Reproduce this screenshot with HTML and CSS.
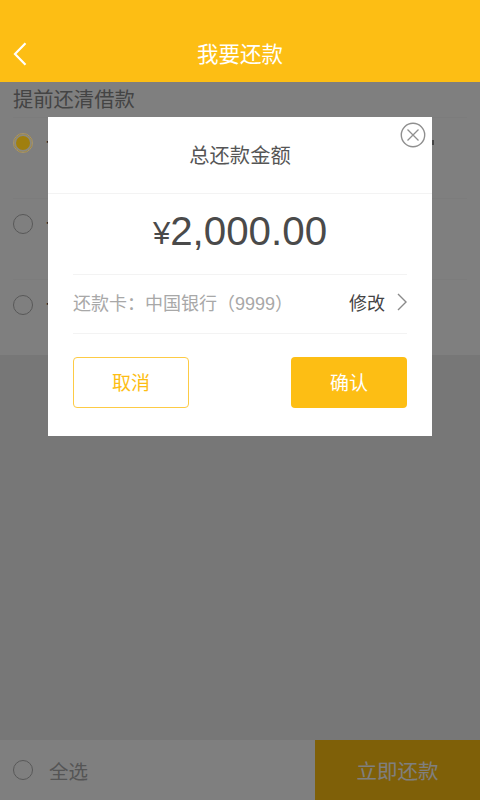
FILE: index.html
```html
<!DOCTYPE html>
<html lang="zh">
<head>
<meta charset="utf-8">
<title>我要还款</title>
<link rel="stylesheet" href="styles.css">
</head>
<body>
<div class="app">
  <main class="page">
    <div class="section-title">提前还清借款</div>
    <div class="row"><span class="radio radio-on"></span><span class="row-text">一</span><span class="row-mark"></span></div>
    <div class="row"><span class="radio"></span><span class="row-text">一</span></div>
    <div class="row"><span class="radio"></span><span class="row-text">一</span></div>
  </main>
  <footer class="footer">
    <div class="select-all"><span class="radio"></span><span>全选</span></div>
    <div class="pay">立即还款</div>
  </footer>
  <div class="overlay"></div>
  <header class="header">
    <svg class="back" viewBox="0 0 14 24" width="14" height="24"><path d="M12.5 1.2 2 12l10.5 10.8" fill="none" stroke="#fff" stroke-width="2.2"/></svg>
    <span>我要还款</span>
  </header>
  <section class="modal">
    <svg class="close" viewBox="0 0 26 26" width="26" height="26"><circle cx="13" cy="13" r="11.7" fill="none" stroke="#8f8f8f" stroke-width="1.4"/><path d="M7.5 7.5l11 11M18.5 7.5l-11 11" fill="none" stroke="#8f8f8f" stroke-width="1.3"/></svg>
    <h2 class="modal-title">总还款金额</h2>
    <div class="modal-body">
      <div class="amount"><span class="yen">¥</span>2,000.00</div>
      <div class="card-row">
        <span class="card">还款卡：中国银行（9999）</span>
        <span class="edit">修改</span>
        <svg class="chev" viewBox="0 0 10 18" width="10" height="18"><path d="M1 1l8 8-8 8" fill="none" stroke="#8a8a8a" stroke-width="1.4"/></svg>
      </div>
      <div class="actions">
        <button class="btn btn-line">取消</button>
        <button class="btn btn-fill">确认</button>
      </div>
    </div>
  </section>
</div>
</body>
</html>
```
FILE: styles.css
```css
* { box-sizing: border-box; }
html, body { margin: 0; padding: 0; }
body { font-family: "Liberation Sans", "Noto Sans CJK SC", sans-serif; }
.app {
  position: relative;
  width: 480px;
  height: 800px;
  overflow: hidden;
  background: #eeeeee;
  display: flex;
  flex-direction: column;
  padding-top: 82px;
}
.header {
  position: absolute;
  top: 0; left: 0; right: 0;
  height: 82px;
  padding-top: 23px;
  background: #fdbe14;
  color: #fff;
  font-size: 21.5px;
  display: flex;
  align-items: center;
  justify-content: center;
}
.back { position: absolute; left: 13px; top: 42px; }
.page { background: #fff; height: 273px; padding: 0 13px; }
.section-title { height: 35px; font-size: 20.3px; line-height: 36px; color: #888; }
.row {
  height: 81px;
  display: flex;
  align-items: flex-start;
  gap: 13px;
  padding-top: 15px;
  border-top: 1px solid #f8f8f8;
  font-size: 20px;
  line-height: 20px;
  color: #444;
}
.radio {
  width: 20px; height: 20px;
  border-radius: 50%;
  border: 1.5px solid #b0b0b0;
  flex: none;
}
.radio-on {
  position: relative;
  z-index: 1;
  border-color: #a8946a;
  background: #a07f0e;
  box-shadow: inset 0 0 0 2px #8c8a80;
}
.row-text { white-space: nowrap; }
.row-mark {
  margin-left: auto;
  margin-right: 33px;
  margin-top: 7px;
  width: 2px;
  height: 5px;
  background: #888;
}
.footer {
  margin-top: auto;
  height: 60px;
  background: #fff;
  display: flex;
  align-items: stretch;
  font-size: 19.5px;
  color: #aaa;
}
.select-all { flex: 1; display: flex; align-items: center; gap: 16px; padding-left: 13px; }
.pay {
  width: 165px;
  background: #ffc010;
  color: #fff;
  display: flex; align-items: center; justify-content: center;
  font-size: 20.5px;
}
.overlay { position: absolute; inset: 82px 0 0 0; background: rgba(0,0,0,.5); }
.modal {
  position: absolute;
  left: 48px; top: 117px;
  width: 384px; height: 319px;
  background: #fff;
}
.close { position: absolute; right: 6px; top: 5px; }
.modal-title {
  margin: 0;
  height: 77px;
  padding-bottom: 3px;
  border-bottom: 1px solid #f3f3f3;
  font-size: 20.3px;
  font-weight: 400;
  color: #555;
  display: flex; align-items: center; justify-content: center;
}
.modal-body { padding: 0 25px; }
.amount {
  height: 81px;
  padding-bottom: 5px;
  border-bottom: 1px solid #f3f3f3;
  font-size: 40.3px;
  color: #4a4a4a;
  display: flex; align-items: center; justify-content: center;
}
.yen { font-size: 31px; margin-top: 4px; }
.card-row {
  height: 59px;
  padding-bottom: 4px;
  border-bottom: 1px solid #f3f3f3;
  display: flex; align-items: center;
  font-size: 18px;
  color: #a8a8a8;
}
.card { flex: 1; }
.edit { color: #444; margin-right: 12px; }
.actions { display: flex; justify-content: space-between; padding-top: 23px; }
.btn {
  width: 116px; height: 51px;
  border-radius: 4px;
  font: inherit;
  font-size: 19px;
  padding: 0 0 2px;
}
.btn-line { background: #fff; border: 1px solid #fdcb45; color: #fdbe14; }
.btn-fill { background: #fdbe14; border: 0; color: #fff; }
```
